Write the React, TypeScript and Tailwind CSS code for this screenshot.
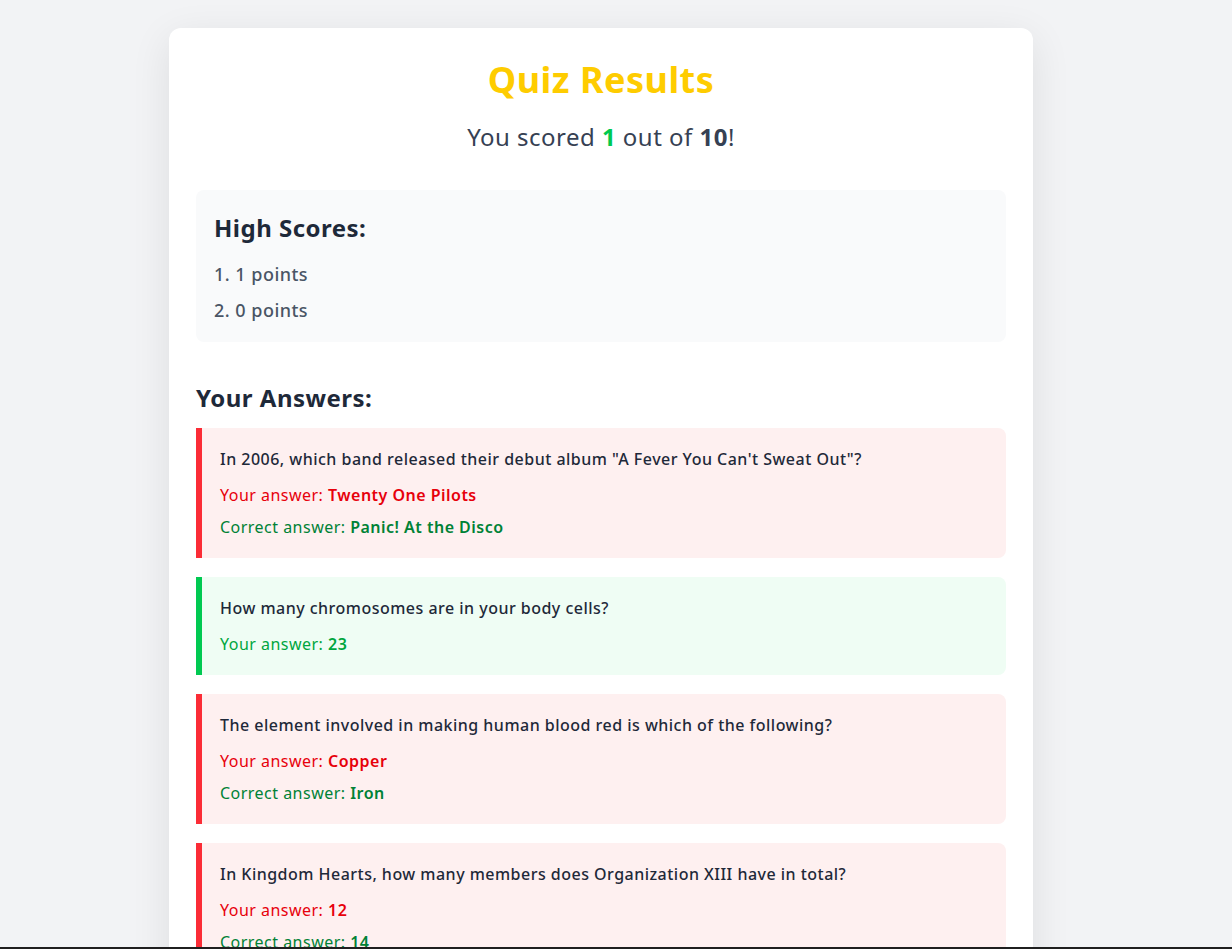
import React from 'react';

type Answer = {
  question: string;
  yours: string;
  correct: string;
};

const answers: Answer[] = [
  { question: 'In 2006, which band released their debut album "A Fever You Can\'t Sweat Out"?', yours: 'Twenty One Pilots', correct: 'Panic! At the Disco' },
  { question: 'How many chromosomes are in your body cells?', yours: '23', correct: '23' },
  { question: 'The element involved in making human blood red is which of the following?', yours: 'Copper', correct: 'Iron' },
  { question: 'In Kingdom Hearts, how many members does Organization XIII have in total?', yours: '12', correct: '14' },
  { question: 'What is the capital of Australia?', yours: 'Sydney', correct: 'Canberra' },
];

const highScores = [1, 0];

const App = () => {
  return (
    <div
      className="min-h-screen bg-[#f2f3f5] pt-7 pr-[30px] pb-10 tracking-[0.03em]"
      style={{ fontFamily: '"Noto Sans", "Open Sans", sans-serif' }}
    >
      <div className="mx-auto w-[864px] rounded-xl bg-white px-[27px] pt-8 pb-8 shadow-[0_10px_40px_rgba(0,0,0,0.09)]">
        {/* Titulo */}
        <h1 className="text-center text-4xl leading-10 font-bold text-[#fecc00]">Quiz Results</h1>
        <p className="mt-[21px] text-center text-2xl leading-8 text-[#364153]">
          You scored <span className="font-bold text-[#00c950]">1</span> out of <span className="font-bold">10</span>!
        </p>

        {/* Puntuaciones */}
        <div className="mt-[37px] rounded-lg bg-[#f9fafb] px-[18px] pt-[22px] pb-[18px]">
          <h2 className="text-2xl leading-8 font-bold text-[#1e2939]">High Scores:</h2>
          <ol className="mt-4 flex flex-col gap-2">
            {highScores.map((score, i) => (
              <li key={i} className="text-lg leading-7 font-medium text-[#4a5565]">
                {i + 1}. {score} points
              </li>
            ))}
          </ol>
        </div>

        {/* Respuestas */}
        <h2 className="mt-10 mb-[14px] text-2xl leading-8 font-bold text-[#1e2939]">Your Answers:</h2>
        <div className="flex flex-col gap-[19px]">
          {answers.map((a) => {
            const ok = a.yours === a.correct;
            return (
              <div
                key={a.question}
                className={`rounded-r-lg border-l-[6px] py-[19px] pr-6 pl-[18px] ${
                  ok ? 'border-[#00c951] bg-[#effdf4]' : 'border-[#fb2c36] bg-[#fef0f0]'
                }`}
              >
                <p className="text-base leading-6 font-medium text-[#1e2939]">{a.question}</p>
                <div className="mt-3 flex flex-col gap-2">
                  <p className={`text-base leading-6 ${ok ? 'text-[#00a63e]' : 'text-[#e7000b]'}`}>
                    Your answer: <span className="font-semibold">{a.yours}</span>
                  </p>
                  {!ok && (
                    <p className="text-base leading-6 text-[#008236]">
                      Correct answer: <span className="font-semibold">{a.correct}</span>
                    </p>
                  )}
                </div>
              </div>
            );
          })}
        </div>
      </div>
      <div className="fixed bottom-0 left-0 h-[2px] w-full bg-[#1f1f1f]" />
    </div>
  );
};

export default App;
